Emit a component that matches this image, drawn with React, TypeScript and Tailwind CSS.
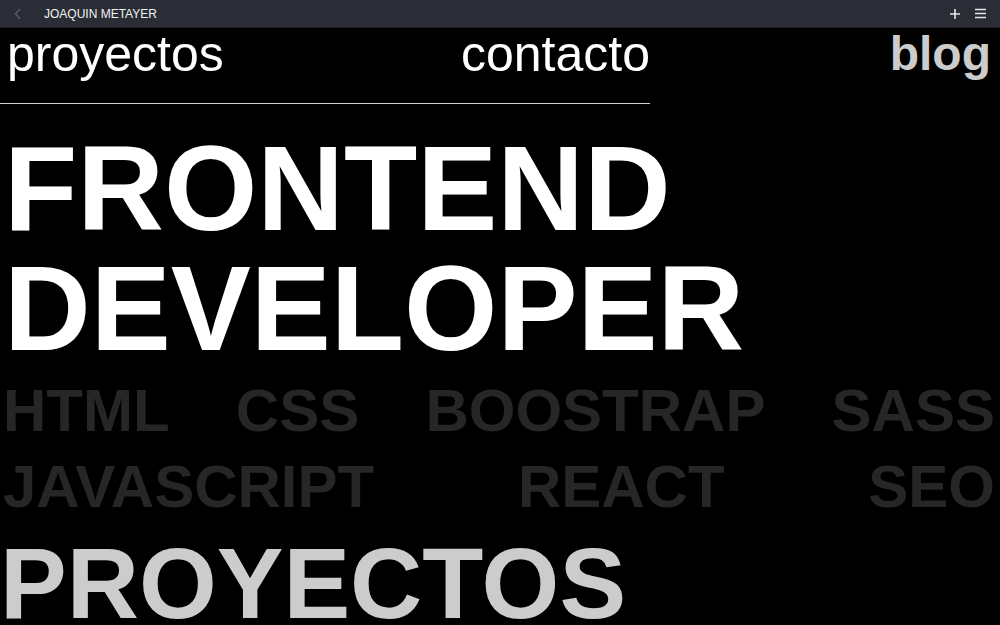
import React from 'react';

const skillRows = [
  ['HTML', 'CSS', 'BOOSTRAP', 'SASS'],
  ['JAVASCRIPT', 'REACT', 'SEO'],
];

const TopBar = () => (
  <div className="h-[28px] bg-[#2a2d35] flex items-center text-white border-b border-[#1c1e23]">
    <svg width="10" height="14" viewBox="0 0 10 14" className="ml-[13px]">
      <path d="M7 2 L2.5 7 L7 12" fill="none" stroke="#5b5f68" strokeWidth="1.3" />
    </svg>
    <span className="ml-[21px] text-[12px] font-medium text-[#f2f2f2]">JOAQUIN METAYER</span>
    <div className="ml-auto flex items-center gap-[14px] pr-[14px]">
      <svg width="12" height="12" viewBox="0 0 12 12">
        <path d="M6 1 V11 M1 6 H11" stroke="#e6e6e6" strokeWidth="1.6" />
      </svg>
      <svg width="11" height="11" viewBox="0 0 11 11">
        <path d="M0 1.5 H11 M0 5.5 H11 M0 9.5 H11" stroke="#e6e6e6" strokeWidth="1.6" />
      </svg>
    </div>
  </div>
);

const App = () => {
  return (
    <div className="h-[625px] overflow-hidden bg-black font-['Liberation_Sans',Arial,sans-serif]">
      <TopBar />

      <nav className="flex items-start">
        <div className="w-[650px] flex justify-between pl-[7px] pt-[1px] pb-[24px] border-b border-[#cfcfcf]">
          <a className="text-[50px] leading-none text-white">proyectos</a>
          <a className="text-[50px] leading-none text-white">contacto</a>
        </div>
        <a className="ml-auto pr-[9px] pt-[2px] text-[48px] leading-none font-bold text-[#cccccc]">blog</a>
      </nav>

      <h1 className="mt-[24px] pl-[4px] text-[120px] leading-none font-bold text-white">
        FRONTEND
        <br />
        DEVELOPER
      </h1>

      <div className="mt-[5px] pl-[3px] pr-[5px]">
        {skillRows.map((row, i) => (
          <div key={i} className="flex justify-between text-[60px] leading-[76px] font-bold text-[#262626]">
            {row.map(s => (
              <span key={s}>{s}</span>
            ))}
          </div>
        ))}
      </div>

      <h2 className="mt-[8px] text-[100px] leading-none font-bold text-[#cccccc]">PROYECTOS</h2>
    </div>
  );
};

export default App;
